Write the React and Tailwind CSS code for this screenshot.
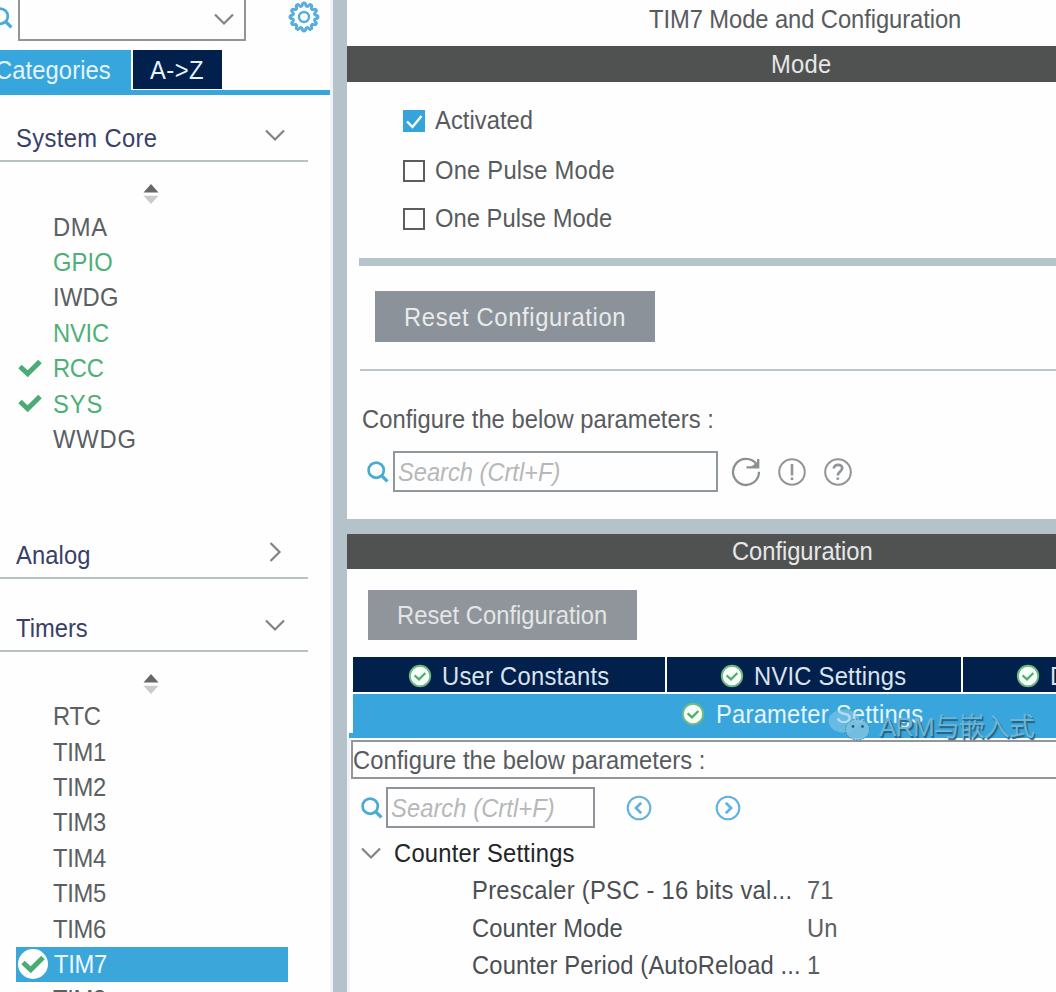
import clsx from 'clsx';

const CORE = [
  { name: 'DMA', track: 'tracking-[0.7px]' },
  { name: 'GPIO', used: true, track: 'tracking-[0.1px]' },
  { name: 'IWDG', track: 'tracking-[0.3px]' },
  { name: 'NVIC', used: true, track: 'tracking-[-0.2px]' },
  { name: 'RCC', used: true, checked: true, track: 'tracking-[-0.3px]' },
  { name: 'SYS', used: true, checked: true, track: 'tracking-[0.9px]' },
  { name: 'WWDG', track: 'tracking-[0.9px]' },
];

const TIMERS = ['RTC', 'TIM1', 'TIM2', 'TIM3', 'TIM4', 'TIM5', 'TIM6', 'TIM7', 'TIM8'];

const PARAMS = [
  { name: 'Prescaler (PSC - 16 bits val...', value: '71', track: 'tracking-[0.3px]' },
  { name: 'Counter Mode', value: 'Un', track: 'tracking-[0.02px]' },
  { name: 'Counter Period (AutoReload ...', value: '1', track: 'tracking-[0.14px]' },
];

function Label({ className, children }) {
  return (
    <span className={clsx('inline-block shrink-0 origin-left scale-x-95 whitespace-nowrap', className)}>
      {children}
    </span>
  );
}

function SearchIcon({ className }) {
  return (
    <svg viewBox="0 0 22 22" className={clsx('size-[22px] shrink-0', className)} fill="none" stroke="#4aaad6">
      <circle cx="9.2" cy="9.2" r="7.6" strokeWidth="2.7" />
      <path d="M14.6 14.6 L20.4 20.4" strokeWidth="3.4" />
    </svg>
  );
}

function GearIcon() {
  const pts = [];
  for (let i = 0; i < 120; i++) {
    const a = (i / 120) * Math.PI * 2;
    const r = 12.5 + 1.5 * Math.tanh(2 * Math.cos(a * 12));
    pts.push(`${(16 + r * Math.sin(a)).toFixed(2)} ${(16 - r * Math.cos(a)).toFixed(2)}`);
  }
  return (
    <svg viewBox="0 0 32 32" className="size-8 shrink-0" fill="none" stroke="#57aedb">
      <path d={`M${pts.join('L')}Z`} strokeWidth="2.9" />
      <circle cx="16" cy="16" r="5" strokeWidth="2.5" />
    </svg>
  );
}

function Chevron({ right, className }) {
  return (
    <svg viewBox="0 0 20 20" className={clsx('size-5 shrink-0', className)} fill="none" stroke="#838383" strokeWidth="2.2">
      <path d={right ? 'M5.5 1 L14.5 10 L5.5 19' : 'M1 5.5 L10 14.5 L19 5.5'} />
    </svg>
  );
}

function Sorter() {
  return (
    <svg viewBox="0 0 16 20" className="ml-[143px] block h-5 w-4">
      <path d="M8 0 L15.5 8.5 H0.5 Z" fill="#666768" />
      <path d="M8 20 L15.5 11.8 H0.5 Z" fill="#c9cbcc" />
    </svg>
  );
}

function Tick() {
  return (
    <svg viewBox="0 0 24 19" className="h-[19px] w-6 shrink-0" fill="none" stroke="#4bab74" strokeWidth="5">
      <path d="M2 7.5 L9.7 14.8 L22 2.5" />
    </svg>
  );
}

function OkBadge() {
  return (
    <svg viewBox="0 0 24 24" className="size-6 shrink-0" fill="none">
      <circle cx="12" cy="12" r="10.2" fill="#fbfffb" stroke="#6cbb80" strokeWidth="1.9" />
      <path d="M6.6 11.4 L11 15.4 L17.4 9" stroke="#4fae6b" strokeWidth="2.3" />
    </svg>
  );
}

function ArrowCircle({ right }) {
  return (
    <svg viewBox="0 0 26 26" className="size-[26px] shrink-0" fill="none" stroke="#62b1e0">
      <circle cx="13" cy="13" r="11.3" strokeWidth="2.1" />
      <path d={right ? 'M10.8 7.8 L16 13 L10.8 18.2' : 'M15.2 7.8 L10 13 L15.2 18.2'} strokeWidth="2.7" />
    </svg>
  );
}

function RefreshIcon() {
  return (
    <svg viewBox="0 0 30 30" className="size-[30px] shrink-0" fill="none" stroke="#8b9093" strokeWidth="2.3">
      <path d="M28 14.8 A13 13 0 1 1 25.6 7.4" />
      <path d="M27.2 2 V10.4 H15.5" strokeWidth="2.3" />
      <path d="M27.2 4.6 V10.4 H19 Z" fill="#8b9093" stroke="none" />
    </svg>
  );
}

function AlertIcon() {
  return (
    <svg viewBox="0 0 30 30" className="size-[30px] shrink-0" fill="none" stroke="#909598" strokeWidth="2">
      <circle cx="15" cy="15" r="12.8" />
      <path d="M15 7 V18.6 M15 20.6 V23" strokeWidth="2.6" />
    </svg>
  );
}

function HelpIcon() {
  return (
    <svg viewBox="0 0 30 30" className="size-[30px] shrink-0" fill="none" stroke="#909598" strokeWidth="2">
      <circle cx="15" cy="15" r="12.8" />
      <path d="M10.8 11.6 C10.8 6.6 19.2 6.6 19.2 11.2 C19.2 14.4 14.8 14.6 14.8 18.4 M14.8 20.4 V22.8" strokeWidth="2.7" />
    </svg>
  );
}

function GroupHeader({ title, track, open, className }) {
  return (
    <div className={clsx('flex w-[308px] items-start justify-between border-b-2 border-[#b8c1c4] pl-4', className)}>
      <Label className={clsx('leading-9 text-[#393f68]', track)}>{title}</Label>
      <Chevron right={!open} className="mt-[5px] mr-[23px]" />
    </div>
  );
}

function Sidebar() {
  return (
    <aside className="flex h-[992px] w-[333px] shrink-0 flex-col overflow-hidden border-r-3 border-[#eff3f5] bg-[#fefefe]">
      <div className="flex h-[50px] shrink-0 items-start">
        <SearchIcon className="-ml-[9px] mt-[7px]" />
        <div className="ml-[5px] flex h-[41px] w-[228px] justify-end border-2 border-t-0 border-[#929495]">
          <Chevron className="mt-[9px] mr-[10px]" />
        </div>
        <div className="mt-px ml-[42px]">
          <GearIcon />
        </div>
      </div>
      <div className="flex h-[45px] w-[330px] shrink-0 items-start gap-[2px] border-b-[5px] border-[#37a6dc] text-[#e6f3fa]">
        <div className="h-10 w-[131px] bg-[#37a6dc] leading-10">
          <Label className="-ml-[5px] tracking-[0.1px]">Categories</Label>
        </div>
        <div className="h-[39px] w-[89px] bg-[#01204b] pl-[17px] leading-10">
          <Label className="tracking-[0.5px]">A-&gt;Z</Label>
        </div>
      </div>

      <GroupHeader open title="System Core" track="tracking-[0.4px]" className="mt-[25px] h-[42px] shrink-0" />
      <div className="mt-[22px]">
        <Sorter />
      </div>
      <ul className="mt-[5px] h-[248px] shrink-0">
        {CORE.map((p) => (
          <li key={p.name} className={clsx('flex h-[35.4px] items-center', p.used ? 'text-[#4fb077]' : 'text-[#5c5f62]')}>
            <span className="w-[53px] shrink-0 pl-[18px]">{p.checked && <Tick />}</span>
            <Label className={clsx('pt-px', p.track)}>{p.name}</Label>
          </li>
        ))}
      </ul>

      <GroupHeader title="Analog" track="tracking-[0.1px]" className="mt-20 h-[42px] shrink-0" />
      <GroupHeader open title="Timers" className="mt-[31px] h-[42px] shrink-0" />
      <div className="mt-[22px]">
        <Sorter />
      </div>
      <ul className="mt-[5px] shrink-0">
        {TIMERS.map((name) => {
          const active = name === 'TIM7';
          return (
            <li
              key={name}
              className={clsx('ml-4 flex h-[35.4px] w-[272px] items-center', active ? 'bg-[#3aa6da] text-[#eef8fc]' : 'text-[#5c5f62]')}
            >
              <span className={clsx('flex shrink-0 items-center pl-[2px]', active ? 'w-[38px]' : 'w-[37px]')}>
                {active && (
                  <span className="flex size-[30px] items-center justify-center rounded-full bg-white">
                    <Tick />
                  </span>
                )}
              </span>
              <Label className="tracking-[-0.3px]">{name}</Label>
            </li>
          );
        })}
      </ul>
    </aside>
  );
}

function CheckRow({ label, checked, track, className }) {
  return (
    <div className={clsx('flex h-[22px] items-center', className)}>
      {checked ? (
        <span className="size-[22px] shrink-0 bg-[#36a3da]">
          <svg viewBox="0 0 22 22" className="size-[22px]" fill="none" stroke="#fff" strokeWidth="2.4">
            <path d="M4 11.5 L9.5 17 L18.5 6" />
          </svg>
        </span>
      ) : (
        <span className="size-[22px] shrink-0 border-2 border-[#5b5d5e]" />
      )}
      <Label className={clsx('ml-[10px] pb-[2px]', track)}>{label}</Label>
    </div>
  );
}

function ModePanel() {
  return (
    <section className="flex h-[519px] flex-col bg-[#fefefe]">
      <div className="h-[46px] pl-[302px] leading-[39px]">
        <Label className="tracking-[-0.08px]">TIM7 Mode and Configuration</Label>
      </div>
      <div className="h-9 bg-[#505252] pl-[424px] leading-9 text-[#e6e7e7]">
        <Label className="tracking-[0.3px]">Mode</Label>
      </div>
      <div className="pl-14">
        <CheckRow checked label="Activated" track="tracking-[0.05px]" className="mt-7" />
        <CheckRow label="One Pulse Mode" track="tracking-[0.22px]" className="mt-7" />
        <CheckRow label="One Pulse Mode" track="tracking-[0.02px]" className="mt-[26px]" />
      </div>
      <div className="mt-7 ml-3 h-2 bg-[#b8c4cb]" />
      <button className="mt-[25px] ml-7 h-[51px] w-[280px] bg-[#8b929a] pt-[2px] pl-[29px] text-left text-[#e9ebeb]">
        <Label className="tracking-[0.68px]">Reset Configuration</Label>
      </button>
      <div className="mt-[27px] ml-[13px] h-[2px] bg-[#bac6c9]" />
      <div className="mt-[29px] ml-[15px] leading-[38px]">
        <Label className="tracking-[0.02px]">Configure the below parameters :</Label>
      </div>
      <div className="mt-[13px] ml-5 flex h-[41px] items-center">
        <SearchIcon />
        <div className="ml-[4px] flex h-[41px] w-[325px] items-center border-2 border-[#90979d] pt-px pl-[3px] text-[#b6b8b9] italic">
          <Label className="tracking-[-0.05px]">Search (Crtl+F)</Label>
        </div>
        <div className="ml-[13px] flex gap-[16px]">
          <RefreshIcon />
          <AlertIcon />
          <HelpIcon />
        </div>
      </div>
    </section>
  );
}

function ConfigPanel() {
  return (
    <section className="flex h-[458px] flex-col bg-[#fefefe]">
      <div className="h-[35px] shrink-0 bg-[#505252] pl-[385px] leading-[35px] text-[#e6e7e7]">
        <Label className="tracking-[-0.05px]">Configuration</Label>
      </div>
      <button className="mt-[21px] ml-[21px] h-[50px] w-[269px] shrink-0 bg-[#8f959b] pl-[29px] text-left text-[#e3e5e6]">
        <Label className="tracking-[0.02px]">Reset Configuration</Label>
      </button>
      <div className="mt-[17px] ml-[6px] flex h-[35px] shrink-0 gap-[2px] text-[#dbe3ed]">
        <div className="flex w-[312px] shrink-0 items-center bg-[#01204b] pt-[3px] pl-[55px]">
          <OkBadge />
          <Label className="ml-[10px] tracking-[0.28px]">User Constants</Label>
        </div>
        <div className="flex w-[294px] shrink-0 items-center bg-[#01204b] pt-[3px] pl-[53px]">
          <OkBadge />
          <Label className="ml-[10px] tracking-[0.26px]">NVIC Settings</Label>
        </div>
        <div className="flex grow items-center overflow-hidden bg-[#01204b] pt-[3px] pl-[53px]">
          <OkBadge />
          <Label className="ml-[10px]">DMA Settings</Label>
        </div>
      </div>
      <div className="relative mt-[2px] ml-[2px] flex h-11 shrink-0 flex-col justify-end">
        <div className="ml-1 flex h-[39px] items-center bg-[#38a6dc] pl-[328px] text-[#e6f4fb]">
          <OkBadge />
          <Label className="ml-[11px] pt-px tracking-[0.24px]">Parameter Settings</Label>
        </div>
        <div className="h-[5px] bg-[#38a6dc]" />
        {/* channel watermark lying over the tab */}
        <div className="absolute top-[15px] left-[478px] flex items-center">
          <svg viewBox="0 0 44 36" className="h-9 w-11 shrink-0">
            <ellipse cx="17" cy="12" rx="15.5" ry="11.5" fill="#8ecbe8" fillOpacity="0.55" />
            <ellipse cx="30.5" cy="20.5" rx="12" ry="10.5" fill="#7cc1e2" fillOpacity="0.85" stroke="#4488a9" strokeDasharray="2 1.4" />
            <circle cx="26" cy="17.5" r="1.4" fill="#26617f" />
            <circle cx="35.5" cy="17.5" r="1.4" fill="#26617f" />
          </svg>
          <span className="ml-[8px] font-['Liberation_Sans','Noto_Sans_CJK_SC',sans-serif] text-[26px] leading-9 tracking-[-1px] whitespace-nowrap text-[#6db4d6] [text-shadow:1.5px_1.5px_1px_#2b5f7d]">
            ARM与嵌入式
          </span>
        </div>
      </div>
      <div className="grow border-l-[3px] border-[#f1f4f6] pt-[2px]">
        <div className="-mr-1 ml-px h-[39px] border-2 border-[#929699] leading-[37px]">
          <Label className="tracking-[0.04px]">Configure the below parameters :</Label>
        </div>
        <div className="mt-2 ml-[11px] flex h-[41px] items-center">
          <SearchIcon />
          <div className="ml-[3px] flex h-[41px] w-[209px] items-center border-2 border-[#8e949a] pt-px pl-[3px] text-[#b6b8b9] italic">
            <Label className="tracking-[0.05px]">Search (Crtl+F)</Label>
          </div>
          <div className="ml-[31px] flex gap-[63px]">
            <ArrowCircle />
            <ArrowCircle right />
          </div>
        </div>
        <div className="mt-[6px] ml-[11px] flex h-[38px] items-center text-[#232527]">
          <Chevron />
          <Label className="ml-[13px] tracking-[0.25px]">Counter Settings</Label>
        </div>
        {PARAMS.map((p) => (
          <div key={p.name} className="grid h-[37.4px] grid-cols-[335px_1fr] items-center pl-[122px] text-[#4b4e52]">
            <Label className={p.track}>{p.name}</Label>
            <Label className="text-[#5c6064]">{p.value}</Label>
          </div>
        ))}
      </div>
    </section>
  );
}

export default function App() {
  return (
    <div className="flex h-[992px] w-[1056px] overflow-hidden bg-[#b5c2ca] font-['Liberation_Sans',Arial,sans-serif] text-[25px] leading-[35px] text-[#585b5e]">
      <Sidebar />
      <main className="ml-[14px] flex min-w-0 grow flex-col gap-[15px] overflow-hidden">
        <ModePanel />
        <ConfigPanel />
      </main>
    </div>
  );
}
